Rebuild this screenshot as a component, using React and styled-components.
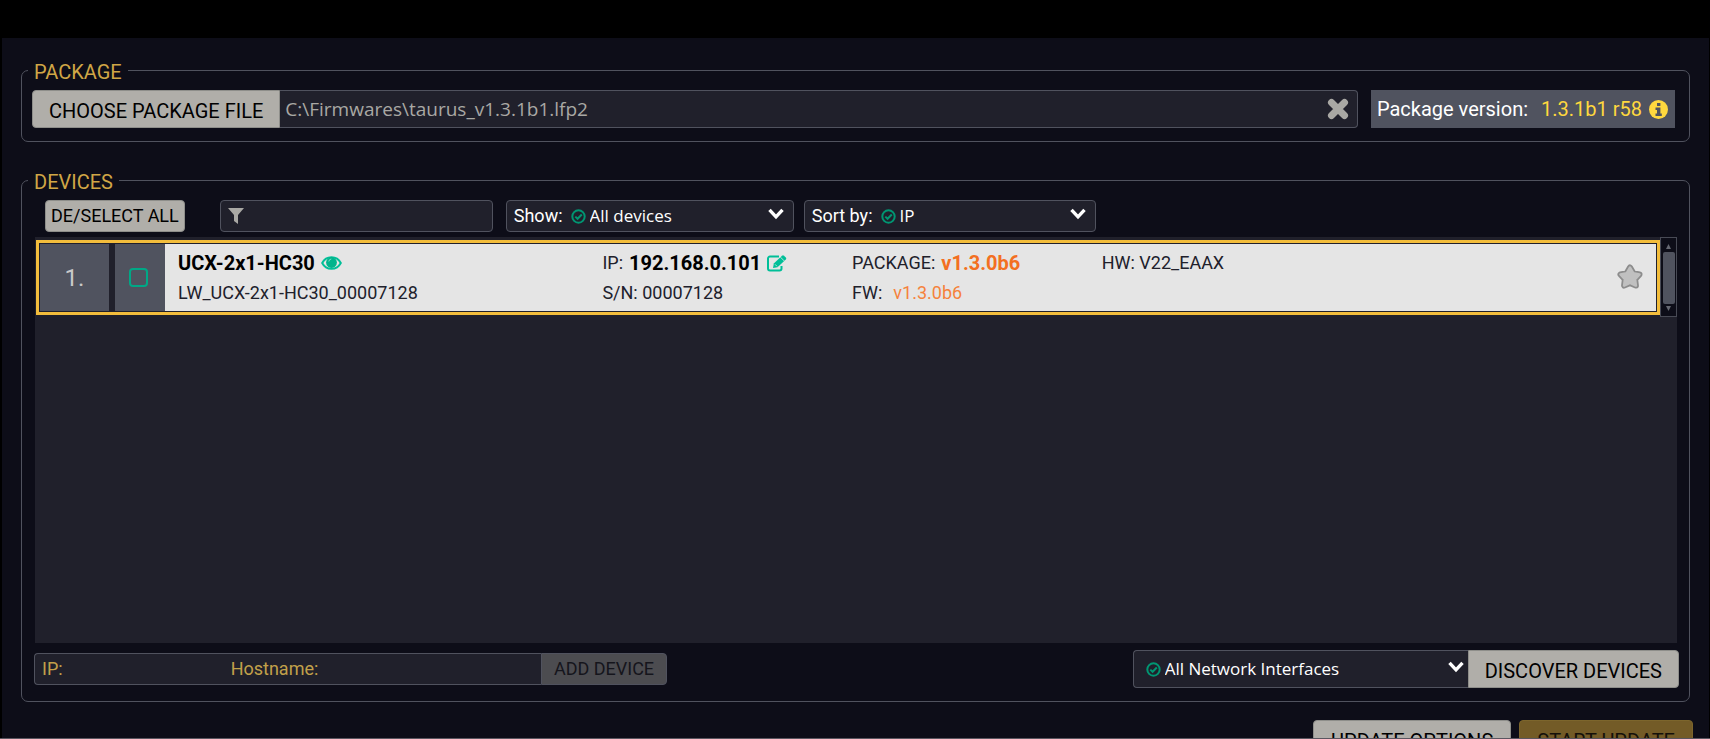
import React from 'react';
import styled, { createGlobalStyle } from 'styled-components';

const GlobalStyle = createGlobalStyle`
  * {
    box-sizing: border-box;
  }

  body {
    margin: 0;
    background: #000;
    color: #fff;
    font-family: Roboto, 'Liberation Sans', sans-serif;
    font-size: 18px;
    line-height: 24px;
  }

  button,
  input,
  select {
    margin: 0;
    font: inherit;
  }
`;

const Window = styled.div`
  height: 100vh;
  overflow: hidden;
  padding: 38px 1px 0 2px;
  border-bottom: 1px solid #5a5660;
`;

const Content = styled.main`
  display: flex;
  flex-direction: column;
  min-height: 100%;
  padding: 17px 19px 0 19px;
  background: #0d0d18;
`;

const Panel = styled.fieldset`
  min-width: 0;
  margin: 0 0 ${(props) => props.$gap};
  padding: ${(props) => props.$pad};
  border: 1px solid #50525e;
  border-radius: 7px;
`;

const Legend = styled.legend`
  margin-left: -4px;
  padding: 4px 6px 0;
  color: #d0a646;
  font-size: 20px;
  line-height: 26px;
`;

const Row = styled.div`
  display: flex;
  align-items: center;
`;

const Toolbar = styled(Row)`
  padding-left: 13px;
`;

const corners = {
  left: '4px 0 0 4px',
  right: '0 4px 4px 0',
};

const Button = styled.button`
  flex: none;
  height: ${(props) => (props.$small ? '32px' : '38px')};
  padding: ${(props) => (props.$small ? '0 5px' : '3px 16px 0')};
  border: 1px solid #8e8e8a;
  border-radius: ${(props) => corners[props.$joined] || '4px'};
  background: #b0aea9;
  color: #000;
  font-size: ${(props) => (props.$small ? '18px' : '20px')};
`;

const AddButton = styled(Button)`
  width: 126px;
  border-color: #50525e;
  background: #4c4c50;
  color: #15151c;
`;

const Field = styled.div`
  display: flex;
  align-items: center;
  height: ${(props) => (props.$tall ? '38px' : '32px')};
  border: 1px solid #50525e;
  border-radius: 4px;
  background: #20202b;
`;

const PathField = styled(Field)`
  flex: 1;
  margin-right: 13px;
  padding: 0 8px 0 5px;
  border-left: 0;
  border-radius: ${corners.right};
`;

const TextInput = styled.input`
  flex: ${(props) => (props.$width ? `0 0 ${props.$width}` : 1)};
  min-width: 0;
  padding: 0;
  border: 0;
  outline: 0;
  background: transparent;
  color: #a9a8a4;
`;

const PathInput = styled(TextInput)`
  font-family: 'Open Sans', 'Noto Sans', sans-serif;
  font-size: 19px;
`;

const IconButton = styled.button`
  display: flex;
  padding: 0;
  border: 0;
  background: transparent;
`;

const Version = styled.div`
  display: flex;
  align-items: center;
  height: 38px;
  padding: 0 7px 0 6px;
  background: #50535f;
  font-size: 20px;
`;

const VersionNumber = styled.span`
  margin: 0 7px 0 13px;
  color: #ffd83e;
`;

const FilterField = styled(Field)`
  width: 273px;
  margin: 0 13px 0 35px;
  padding: 0 7px;
  gap: 8px;
`;

const SelectField = styled(Field)`
  position: relative;
  width: ${(props) => props.$width};
  margin-right: 10px;
  padding-left: 7px;
`;

const SelectLabel = styled.label`
  margin-right: 8px;
`;

const Select = styled.select`
  flex: 1;
  align-self: stretch;
  min-width: 0;
  padding: 0 24px 0 4px;
  border: 0;
  outline: 0;
  appearance: none;
  background: transparent;
  color: #fff;
  font-family: 'Open Sans', 'Noto Sans', sans-serif;
  font-size: 17px;
`;

const Chevron = styled.svg`
  position: absolute;
  right: ${(props) => (props.$tall ? '3px' : '8px')};
  top: ${(props) => (props.$tall ? '10px' : '7px')};
  pointer-events: none;
`;

const DeviceList = styled.div`
  display: flex;
  align-items: flex-start;
  height: 406px;
  margin: 5px 2px 7px 3px;
  background: #20202b;
`;

const Device = styled.article`
  display: flex;
  flex: 1;
  height: 75px;
  margin: 3px 0 0 1px;
  padding: 1px;
  border: 3px solid #f3bd3c;
`;

const Index = styled.div`
  display: flex;
  align-items: center;
  justify-content: center;
  width: 69px;
  margin-right: 6px;
  background: #50535f;
  color: #c9c9c9;
  font-size: 24px;
`;

const CheckCell = styled.label`
  display: flex;
  align-items: center;
  justify-content: center;
  width: 50px;
  padding-right: 3px;
  background: #50535f;
`;

const Checkbox = styled.input`
  appearance: none;
  width: 19px;
  height: 19px;
  margin: 0;
  border: 2px solid #00a886;
  border-radius: 4px;
`;

const Details = styled.div`
  display: grid;
  flex: 1;
  grid-template-columns: 425fr 250fr 250fr 515fr 40px;
  padding-left: 13px;
  background: #e5e5e5;
  color: #20202b;
`;

const Cell = styled.div`
  display: flex;
  flex-direction: column;
  padding-top: 4px;
`;

const Line = styled.div`
  display: flex;
  align-items: center;
  height: 30px;
  gap: 6px;
`;

const Strong = styled.strong`
  color: #000;
  font-size: 20px;
  font-weight: 700;
`;

const Outdated = styled(Strong)`
  color: #f36f21;
`;

const Firmware = styled.span`
  margin-left: 5px;
  color: #f5823c;
`;

const Favourite = styled(IconButton)`
  align-self: center;
  padding-bottom: 2px;
`;

const Scrollbar = styled.div`
  display: flex;
  flex-direction: column;
  align-items: center;
  justify-content: space-between;
  width: 17px;
  height: 80px;
  padding: 6px 0 5px;
  border: 1px solid #484a55;
  background: #0d0d18;
`;

const Thumb = styled.div`
  width: 12px;
  height: 52px;
  border-radius: 2px;
  background: #50535f;
`;

const Footer = styled(Row)`
  justify-content: space-between;
  padding-left: 2px;
`;

const AddField = styled(Field)`
  width: 507px;
  padding-left: 7px;
  border-right: 0;
  border-radius: ${corners.left};
  color: #c2a04a;
`;

const NetworkField = styled(Field)`
  position: relative;
  width: 335px;
  padding-left: 12px;
  border-right: 0;
  border-radius: ${corners.left};
`;

const Actions = styled(Row)`
  justify-content: flex-end;
  margin-right: -3px;
  gap: 8px;
`;

const ActionButton = styled(Button)`
  padding: 3px 17px 0;
`;

const StartButton = styled(ActionButton)`
  border-color: #7c652c;
  background: #735b27;
  color: #15110a;
`;

const CheckIcon = () => (
  <svg width="15" height="15" viewBox="0 0 15 15" fill="none" stroke="#009672" strokeWidth="2">
    <circle cx="7.5" cy="7.5" r="6.2" />
    <path d="M4.3 7.6l2.3 2.2 4.2-4.3" />
  </svg>
);

const ChevronIcon = ({ tall }) => (
  <Chevron $tall={tall} width="17" height="12" viewBox="0 0 17 12">
    <path d="M1.5 1.8l6.5 7 6.500-7" fill="none" stroke="#fff" strokeWidth="3.4" />
  </Chevron>
);

const CloseIcon = () => (
  <svg width="22" height="22" viewBox="0 0 22 22">
    <path d="M4.5 4.5l13 13M17.5 4.5l-13 13" stroke="#a9a8a4" strokeWidth="7" strokeLinecap="round" />
  </svg>
);

const InfoIcon = () => (
  <svg width="19" height="19" viewBox="0 0 19 19">
    <circle cx="9.5" cy="9.5" r="9.5" fill="#ffd83e" />
    <path d="M8 3h3.400v3H8zM6.500 7.500h4.900v6h1.400V16H6.500v-2.500H8V10H6.500z" fill="#50535f" />
  </svg>
);

const FilterIcon = () => (
  <svg width="16" height="16" viewBox="0 0 16 16">
    <path d="M0 0h16L10 7v9l-4-3V7z" fill="#a9a8a4" />
  </svg>
);

const EyeIcon = () => (
  <svg width="21" height="14" viewBox="0 0 21 14">
    <path
      d="M10.5 1.2C6.4 1.2 3 3.500 1.200 7c1.800 3.500 5.200 5.800 9.300 5.800s7.500-2.300 9.300-5.800c-1.800-3.500-5.200-5.800-9.300-5.800z"
      fill="none"
      stroke="#00bf98"
      strokeWidth="2"
    />
    <circle cx="10.5" cy="6.5" r="5.4" fill="#00b48c" />
    <path d="M7.800 5.500a2.800 2.800 0 0 1 2.500-2.500" fill="none" stroke="#7fdcc6" strokeWidth="1" />
  </svg>
);

const EditIcon = () => (
  <svg width="20" height="17" viewBox="0 0 20 17" fill="none" stroke="#00bf98">
    <path d="M12 1.500H3a2 2 0 0 0-2 2v10a2 2 0 0 0 2 2h9.500a2 2 0 0 0 2-2V11" strokeWidth="2" />
    <path
      d="M6 13l.8-4.500L15 .7a1.500 1.500 0 0 1 2 0l1.800 1.800a1.500 1.500 0 0 1 0 2L10.500 12.300z"
      fill="#00bf98"
      stroke="none"
    />
    <path d="M13.500 2.200l3.800 3.800M8 9.300l2 2" stroke="#e5e5e5" strokeWidth="0.8" />
  </svg>
);

const starPath =
  'M14 4.500l3.200 5.600 6.300 1.300-4.400 4.800.8 6.400-5.900-2.700-5.900 2.700.8-6.400-4.400-4.800 6.300-1.300z';

const StarIcon = () => (
  <svg width="28" height="28" viewBox="0 0 28 28" strokeLinejoin="round">
    <path d={starPath} fill="#8c8c8c" stroke="#8c8c8c" strokeWidth="6" />
    <path d={starPath} fill="#c0c0c0" stroke="#c0c0c0" strokeWidth="2.5" />
  </svg>
);

const ScrollArrow = ({ down }) => (
  <svg width="5" height="5" viewBox="0 0 5 5">
    <path d={down ? 'M0 0h5L2.500 5z' : 'M0 5h5L2.500 0z'} fill="#666871" />
  </svg>
);

export default () => {
  return (
    <Window>
      <GlobalStyle />
      <Content>
        <Panel $gap="23px" $pad="5px 14px 13px 10px">
          <Legend>PACKAGE</Legend>
          <Row>
            <Button $joined="left">CHOOSE PACKAGE FILE</Button>
            <PathField $tall>
              <PathInput aria-label="Package file" defaultValue="C:\Firmwares\taurus_v1.3.1b1.lfp2" />
              <IconButton aria-label="Clear">
                <CloseIcon />
              </IconButton>
            </PathField>
            <Version>
              Package version:
              <VersionNumber>1.3.1b1 r58</VersionNumber>
              <InfoIcon />
            </Version>
          </Row>
        </Panel>

        <Panel $gap="18px" $pad="5px 10px 13px 10px">
          <Legend>DEVICES</Legend>
          <Toolbar>
            <Button $small>DE/SELECT ALL</Button>
            <FilterField>
              <FilterIcon />
              <TextInput aria-label="Filter" />
            </FilterField>
            <SelectField $width="288px">
              <SelectLabel htmlFor="show">Show:</SelectLabel>
              <CheckIcon />
              <Select id="show">
                <option>All devices</option>
              </Select>
              <ChevronIcon />
            </SelectField>
            <SelectField $width="292px">
              <SelectLabel htmlFor="sort">Sort by:</SelectLabel>
              <CheckIcon />
              <Select id="sort">
                <option>IP</option>
              </Select>
              <ChevronIcon />
            </SelectField>
          </Toolbar>

          <DeviceList>
            <Device>
              <Index>1.</Index>
              <CheckCell>
                <Checkbox type="checkbox" aria-label="Select device" />
              </CheckCell>
              <Details>
                <Cell>
                  <Line>
                    <Strong>UCX-2x1-HC30</Strong>
                    <EyeIcon />
                  </Line>
                  <Line>LW_UCX-2x1-HC30_00007128</Line>
                </Cell>
                <Cell>
                  <Line>
                    IP: <Strong>192.168.0.101</Strong>
                    <EditIcon />
                  </Line>
                  <Line>S/N: 00007128</Line>
                </Cell>
                <Cell>
                  <Line>
                    PACKAGE: <Outdated>v1.3.0b6</Outdated>
                  </Line>
                  <Line>
                    FW: <Firmware>v1.3.0b6</Firmware>
                  </Line>
                </Cell>
                <Cell>
                  <Line>HW: V22_EAAX</Line>
                </Cell>
                <Favourite aria-label="Favourite">
                  <StarIcon />
                </Favourite>
              </Details>
            </Device>
            <Scrollbar>
              <ScrollArrow />
              <Thumb />
              <ScrollArrow down />
            </Scrollbar>
          </DeviceList>

          <Footer>
            <Row>
              <AddField>
                <label htmlFor="ip">IP:</label>
                <TextInput id="ip" $width="168px" />
                <label htmlFor="hostname">Hostname:</label>
                <TextInput id="hostname" />
              </AddField>
              <AddButton $small $joined="right" disabled>
                ADD DEVICE
              </AddButton>
            </Row>
            <Row>
              <NetworkField $tall>
                <CheckIcon />
                <Select aria-label="Network interface">
                  <option>All Network Interfaces</option>
                </Select>
                <ChevronIcon tall />
              </NetworkField>
              <Button $joined="right">DISCOVER DEVICES</Button>
            </Row>
          </Footer>
        </Panel>

        <Actions>
          <ActionButton>UPDATE OPTIONS</ActionButton>
          <StartButton disabled>START UPDATE</StartButton>
        </Actions>
      </Content>
    </Window>
  );
};
